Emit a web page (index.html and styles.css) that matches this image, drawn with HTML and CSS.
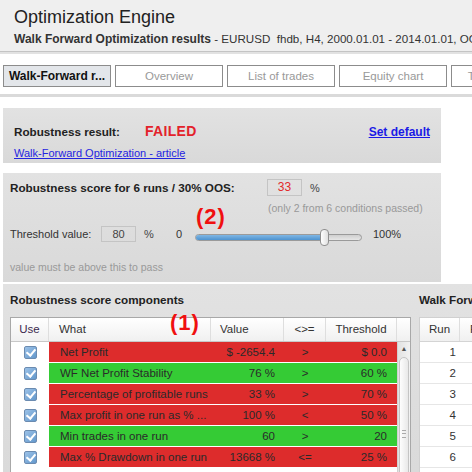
FILE: index.html
```html
<!DOCTYPE html>
<html lang="en">
<head>
  <meta charset="UTF-8">
  <title>Optimization Engine</title>
  <link rel="stylesheet" href="styles.css">
</head>
<body>
  <div class="header">
    <h1>Optimization Engine</h1>
    <div class="subtitle"><b>Walk Forward Optimization results</b> <span class="meta">- EURUSD&nbsp; fhdb, H4, 2000.01.01 - 2014.01.01, OOS</span></div>
  </div>

  <div class="tabs">
    <div class="tab active">Walk-Forward r...</div>
    <div class="tab">Overview</div>
    <div class="tab">List of trades</div>
    <div class="tab">Equity chart</div>
    <div class="tab">Trade analysis</div>
  </div>

  <div class="panel result-panel">
    <div class="result-row">
      <span class="label">Robustness result:</span>
      <span class="failed">FAILED</span>
      <a class="set-default" href="#">Set default</a>
    </div>
    <a class="article" href="#">Walk-Forward Optimization - article</a>
  </div>

  <div class="panel score-panel">
    <div class="score-row">
      <span class="label score-label">Robustness score for 6 runs / 30% OOS:</span>
      <span class="box score-box">33</span>
      <span class="pct">%</span>
    </div>
    <div class="hint passed">(only 2 from 6 conditions passed)</div>
    <div class="threshold-row">
      <span class="th-label">Threshold value:</span>
      <span class="box">80</span>
      <span class="pct th-pct">%</span>
      <span class="zero">0</span>
      <div class="slider">
        <div class="slider-fill" style="width: 78%"></div>
        <div class="slider-thumb"></div>
      </div>
      <span class="hundred">100%</span>
    </div>
    <div class="hint">value must be above this to pass</div>
    <div class="note note-2">(2)</div>
  </div>

  <div class="panel comp-panel">
    <div class="comp-left">
      <div class="label section-title">Robustness score components</div>
      <div class="grid">
        <div class="grid-head">
          <div class="hc c-use">Use</div>
          <div class="hc c-what">What</div>
          <div class="hc c-val">Value</div>
          <div class="hc c-cmp">&lt;&gt;=</div>
          <div class="hc c-thr">Threshold</div>
          <div class="hc c-sb"></div>
        </div>
        <div class="grid-body">
          <div class="rows">
            <div class="row bad">
              <div class="c-use"><span class="check"></span></div>
              <div class="c-what">Net Profit</div>
              <div class="c-val">$ -2654.4</div>
              <div class="c-cmp">&gt;</div>
              <div class="c-thr">$ 0.0</div>
            </div>
            <div class="row good">
              <div class="c-use"><span class="check"></span></div>
              <div class="c-what">WF Net Profit Stability</div>
              <div class="c-val">76 %</div>
              <div class="c-cmp">&gt;</div>
              <div class="c-thr">60 %</div>
            </div>
            <div class="row bad">
              <div class="c-use"><span class="check"></span></div>
              <div class="c-what">Percentage of profitable runs</div>
              <div class="c-val">33 %</div>
              <div class="c-cmp">&gt;</div>
              <div class="c-thr">70 %</div>
            </div>
            <div class="row bad">
              <div class="c-use"><span class="check"></span></div>
              <div class="c-what">Max profit in one run as % ...</div>
              <div class="c-val">100 %</div>
              <div class="c-cmp">&lt;</div>
              <div class="c-thr">50 %</div>
            </div>
            <div class="row good">
              <div class="c-use"><span class="check"></span></div>
              <div class="c-what">Min trades in one run</div>
              <div class="c-val">60</div>
              <div class="c-cmp">&gt;</div>
              <div class="c-thr">20</div>
            </div>
            <div class="row bad">
              <div class="c-use"><span class="check"></span></div>
              <div class="c-what">Max % Drawdown in one run</div>
              <div class="c-val">13668 %</div>
              <div class="c-cmp">&lt;=</div>
              <div class="c-thr">25 %</div>
            </div>
          </div>
          <div class="scrollbar">
            <div class="sb-arrow">&#9650;</div>
            <div class="sb-thumb"><span class="grip"></span></div>
          </div>
        </div>
      </div>
    </div>

    <div class="comp-right">
      <div class="label section-title">Walk Forward Optimization runs</div>
      <div class="runs">
        <div class="runs-head">
          <div class="r-run">Run</div>
          <div class="r-profit">Profit</div>
        </div>
        <div class="run-row"><div class="r-run">1</div></div>
        <div class="run-row"><div class="r-run">2</div></div>
        <div class="run-row"><div class="r-run">3</div></div>
        <div class="run-row"><div class="r-run">4</div></div>
        <div class="run-row"><div class="r-run">5</div></div>
        <div class="run-row"><div class="r-run">6</div></div>
      </div>
    </div>
    <div class="note note-1">(1)</div>
  </div>
</body>
</html>
```

FILE: styles.css
```css
body {
  margin: 0;
  width: 472px;
  height: 472px;
  overflow: hidden;
  background: #fff;
  font-family: "Liberation Sans", Arial, sans-serif;
  color: #333;
}
.header {
  background: #efefef;
  padding: 6px 0 5px 14px;
  height: 40px;
  border-bottom: 1px solid #c4c4c4;
  white-space: nowrap;
  overflow: hidden;
}
h1 {
  margin: 0;
  font-size: 18px;
  line-height: 22px;
  font-weight: normal;
  color: #222;
}
.subtitle {
  margin-top: 3px;
  font-size: 12px;
  line-height: 15px;
  color: #333;
}
.subtitle .meta {
  font-size: 11.6px;
}
.tabs {
  border-top: 2px solid #e2e2e2;
  display: flex;
  gap: 4px;
  padding: 11px 3px 7px 3px;
  border-bottom: 3px solid #dadada;
  white-space: nowrap;
  overflow: hidden;
}
.tab {
  flex: 0 0 106px;
  height: 20px;
  line-height: 20px;
  border: 1px solid #8c8c8c;
  text-align: center;
  font-size: 11.5px;
  color: #999;
  background: #fff;
  overflow: hidden;
}
.tab.active {
  background: #e3e6ea;
  color: #111;
  font-weight: bold;
  font-size: 12px;
}
.panel {
  background: linear-gradient(#e2e2e2, #d9d9d9);
  margin-left: 3px;
  width: 438px;
  position: relative;
}
.label {
  font-weight: bold;
  font-size: 11.7px;
  line-height: 14px;
  color: #222;
}
.result-panel {
  margin-top: 11px;
  height: 55px;
  padding: 0 11px;
  box-sizing: border-box;
  padding-top: 15px;
}
.result-row {
  display: flex;
  align-items: baseline;
}
.result-row .label {
  width: 131px;
}
.failed {
  color: #e3222b;
  font-weight: bold;
  font-size: 14px;
  letter-spacing: 0.3px;
}
.set-default {
  margin-left: auto;
  color: #1a1ae6;
  font-weight: bold;
  font-size: 12px;
}
.article {
  display: block;
  margin-top: 7px;
  color: #2424e0;
  font-size: 11px;
  line-height: 14px;
}
.score-panel {
  margin-top: 10px;
  height: 109px;
  box-sizing: border-box;
  padding: 6px 0 0 7px;
}
.score-row, .threshold-row {
  display: flex;
  align-items: center;
  height: 17px;
}
.score-label {
  width: 257px;
}
.box {
  width: 33px;
  height: 14px;
  line-height: 14px;
  border: 1px solid #c4c4c4;
  text-align: center;
  font-size: 11px;
  color: #444;
}
.score-row .box {
  height: 15px;
  line-height: 15px;
}
.score-box {
  color: #e22a2a;
  font-size: 12px;
}
.pct {
  margin-left: 8px;
  font-size: 11px;
  color: #444;
}
.hint {
  font-size: 10.5px;
  line-height: 13px;
  color: #999;
  margin-top: 19px;
}
.hint.passed {
  margin-top: 6px;
  margin-left: 258px;
}
.threshold-row {
  margin-top: 11px;
  height: 16px;
  font-size: 11px;
  color: #333;
}
.th-label {
  width: 91px;
}
.th-pct {
  width: 32px;
}
.zero {
  width: 19px;
}
.slider {
  position: relative;
  width: 165px;
  height: 5px;
  border: 1px solid #9a9a9a;
  border-radius: 4px;
  background: linear-gradient(#cfcfcf, #e6e6e6);
  margin-top: 7px;
}
.slider-fill {
  height: 100%;
  border-radius: 4px 0 0 4px;
  background: linear-gradient(#7fb6e4, #4d93d0);
}
.slider-thumb {
  position: absolute;
  left: 124px;
  top: -6px;
  width: 7px;
  height: 15px;
  border: 1px solid #8f8f8f;
  border-radius: 4px;
  background: linear-gradient(90deg, #fff, #e0e0e0);
}
.hundred {
  margin-left: 11px;
}
.note {
  position: absolute;
  color: #f01010;
  font-weight: bold;
  font-size: 22px;
  line-height: 22px;
  letter-spacing: 1px;
}
.note-2 {
  left: 193px;
  top: 33px;
}
.note-1 {
  left: 167px;
  top: 28px;
}
.comp-panel {
  margin-top: 2px;
  width: 480px;
  height: 200px;
  padding: 9px 0 0 7px;
  display: flex;
  gap: 8px;
}
.section-title {
  margin-bottom: 10px;
  white-space: nowrap;
}
.comp-left {
  width: 401px;
  flex: none;
}
.grid {
  border: 1px solid #a8a8a8;
  background: #fff;
  height: 160px;
  font-size: 11.5px;
}
.grid-head {
  display: flex;
  height: 23px;
  border-bottom: 1px solid #c8c8c8;
  background: linear-gradient(#ffffff, #f0f0f0);
}
.hc {
  box-sizing: border-box;
  line-height: 23px;
  border-right: 1px solid #dedede;
  color: #333;
}
.hc.c-sb {
  border-right: none;
}
.c-use { width: 38px; text-align: center; box-sizing: border-box; }
.c-what { width: 162px; padding-left: 10px; box-sizing: border-box; }
.c-val { width: 73px; text-align: right; padding-right: 9px; box-sizing: border-box; }
.c-cmp { width: 42px; text-align: center; box-sizing: border-box; }
.c-thr { width: 71px; text-align: right; padding-right: 10px; box-sizing: border-box; }
.c-sb { width: 13px; }
.hc.c-use { color: #3b2a4e; }
.hc.c-val { text-align: left; padding-left: 9px; }
.hc.c-thr { text-align: center; padding-right: 0; }
.hc.c-what { padding-left: 10px; }
.grid-body {
  display: flex;
}
.rows {
  width: 386px;
}
.row {
  display: flex;
  height: 20px;
  line-height: 20px;
  margin-bottom: 1px;
  color: #2a2a2a;
}
.row .c-what { padding-left: 11px; white-space: nowrap; }
.row.bad > div:not(.c-use) { background: #dd2c2c; }
.row.good > div:not(.c-use) { background: #35cb35; }
.check {
  display: inline-block;
  width: 11px;
  height: 11px;
  margin-top: 4px;
  border: 1px solid #6b8bb0;
  border-radius: 2px;
  background: linear-gradient(135deg, #9cc2e8, #6398cc);
  position: relative;
  vertical-align: top;
}
.check::after {
  content: "";
  position: absolute;
  left: 3px;
  top: 0px;
  width: 4px;
  height: 7px;
  border: solid #fff;
  border-width: 0 2px 2px 0;
  transform: rotate(40deg);
}
.scrollbar {
  width: 13px;
  height: 137px;
  background: linear-gradient(90deg, #e2e2e2, #f2f2f2);
  border-left: 1px solid #d0d0d0;
  box-sizing: border-box;
}
.sb-arrow {
  font-size: 7px;
  line-height: 14px;
  text-align: center;
  color: #555;
}
.sb-thumb {
  margin: 1px 1px 0 1px;
  height: 130px;
  border: 1px solid #c4c4c4;
  border-radius: 5px 5px 0 0;
  background: linear-gradient(90deg, #fdfdfd, #e8e8e8);
  position: relative;
}
.grip {
  position: absolute;
  left: 2px;
  right: 2px;
  top: 72px;
  height: 6px;
  border-top: 1px solid #aaa;
  border-bottom: 1px solid #aaa;
}
.grip::after {
  content: "";
  position: absolute;
  left: 0;
  right: 0;
  top: 2px;
  border-top: 1px solid #aaa;
}
.comp-right {
  flex: none;
  width: 120px;
}
.runs {
  border: 1px solid #d0d0d0;
  background: #fff;
  height: 160px;
  font-size: 11.5px;
  color: #333;
}
.runs-head {
  display: flex;
  height: 23px;
  line-height: 23px;
  border-bottom: 1px solid #d4d4d4;
  background: linear-gradient(#ffffff, #f0f0f0);
}
.runs-head .r-run {
  text-align: center;
  padding-right: 0;
  border-right: 1px solid #dedede;
}
.r-run {
  width: 40px;
  box-sizing: border-box;
  text-align: right;
  padding-right: 4px;
}
.r-profit {
  padding-left: 10px;
}
.run-row {
  height: 20px;
  line-height: 20px;
  border-bottom: 1px solid #e6e6e6;
}
```
